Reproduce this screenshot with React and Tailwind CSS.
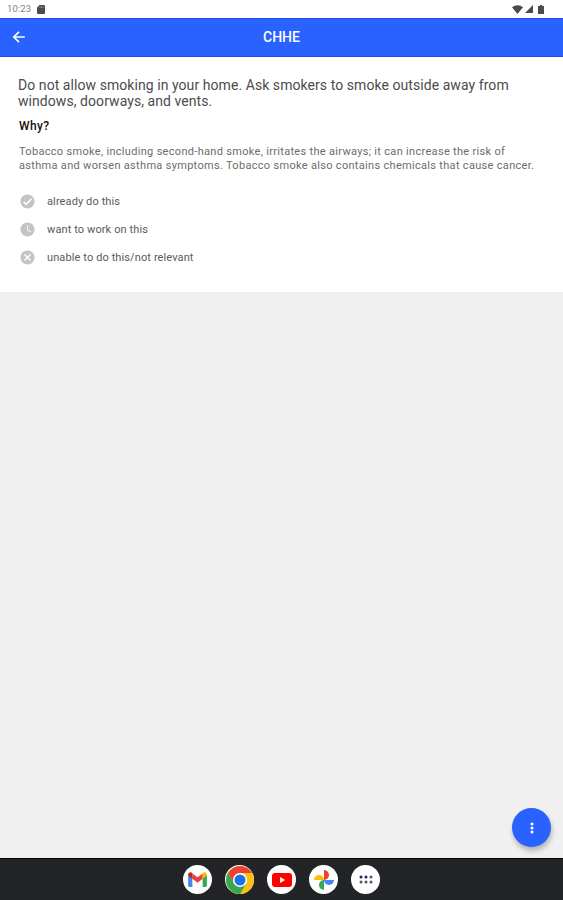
const OPTIONS = [
  { label: "already do this", icon: CheckIcon },
  { label: "want to work on this", icon: ClockIcon },
  { label: "unable to do this/not relevant", icon: CloseIcon },
];

const DOCK = [
  { name: "Gmail", icon: GmailIcon },
  { name: "Chrome", icon: ChromeIcon },
  { name: "YouTube", icon: YouTubeIcon },
  { name: "Photos", icon: PhotosIcon },
  { name: "Apps", icon: AppsIcon },
];

function CheckIcon() {
  return (
    <svg viewBox="0 0 24 24" className="h-[17px] w-[17px]">
      <circle cx="12" cy="12" r="10" fill="#c4c4c4" />
      <path d="m6.500 12.500 3.700 3.500 7.300-7.700" fill="none" stroke="#fff" strokeWidth="2.200" />
    </svg>
  );
}

function ClockIcon() {
  return (
    <svg viewBox="0 0 24 24" className="h-[17px] w-[17px]">
      <circle cx="12" cy="12" r="10" fill="#c4c4c4" />
      <path d="M12 6.500v6l4.500 2.700" fill="none" stroke="#f4f4f4" strokeWidth="1.500" />
    </svg>
  );
}

function CloseIcon() {
  return (
    <svg viewBox="0 0 24 24" className="h-[17px] w-[17px]">
      <circle cx="12" cy="12" r="10" fill="#c4c4c4" />
      <path d="m7.700 7.700 8.600 8.600m0-8.600-8.600 8.600" stroke="#fff" strokeWidth="2" />
    </svg>
  );
}

function GmailIcon() {
  return (
    <svg viewBox="0 0 20 16" className="h-[15px] w-[19px]">
      <path fill="#4285f4" d="M0 3v11.500A1.500 1.500 0 0 0 1.500 16H4.500V6z" />
      <path fill="#34a853" d="M20 3v11.500a1.500 1.500 0 0 1-1.500 1.500h-3V6z" />
      <path fill="#ea4335" d="M4.500 1.500 10 5.700l5.500-4.200V7.200L10 11.400 4.500 7.200z" />
      <path fill="#c5221f" d="M0 3C0 .5 2.600-.5 4.500 1v6.200L0 3.800z" />
      <path fill="#fbbc04" d="M20 3c0-2.500-2.600-3.500-4.500-2v6.200L20 3.800z" />
    </svg>
  );
}

function ChromeIcon() {
  return (
    <svg viewBox="0 0 28 28" className="h-7 w-7">
      <circle cx="14" cy="14" r="14" fill="#fbc116" />
      <path fill="#ea4335" d="M1.900 7A14 14 0 0 1 26.100 7H14L8 17.500z" />
      <path fill="#34a853" d="M1.900 7A14 14 0 0 0 14 28l6-10.500L14 21l-6-3.500z" />
      <circle cx="14" cy="14" r="7" fill="#fff" />
      <circle cx="14" cy="14" r="5.500" fill="#1a73e8" />
    </svg>
  );
}

function YouTubeIcon() {
  return (
    <svg viewBox="0 0 20 14" className="h-[14px] w-5">
      <rect width="20" height="14" rx="3" fill="#f00" />
      <path fill="#fff" d="m8 4 5.200 3L8 10z" />
    </svg>
  );
}

function PhotosIcon() {
  return (
    <svg viewBox="0 0 20 20" className="h-5 w-5">
      <path fill="#ea4335" d="M10 0a5 5 0 0 1 0 10z" />
      <path fill="#4285f4" d="M20 10a5 5 0 0 1-10 0z" />
      <path fill="#34a853" d="M10 20a5 5 0 0 1 0-10z" />
      <path fill="#fbbc04" d="M0 10a5 5 0 0 1 10 0z" />
    </svg>
  );
}

function AppsIcon() {
  return (
    <svg viewBox="0 0 14 9" className="h-[9px] w-[14px]">
      <g fill="#25206b">
        <circle cx="2" cy="2" r="1.500" />
        <circle cx="7" cy="2" r="1.500" />
      </g>
      <g fill="#55555f">
        <circle cx="12" cy="2" r="1.500" />
        <circle cx="2" cy="7" r="1.500" />
        <circle cx="7" cy="7" r="1.500" />
        <circle cx="12" cy="7" r="1.500" />
      </g>
    </svg>
  );
}

function StatusBar() {
  return (
    <div className="flex h-[18px] shrink-0 items-center justify-between bg-white pl-[7px] pr-[19px]">
      <div className="flex items-center gap-[6px]">
        <span className="text-[9.5px] leading-none tracking-[0.1px] text-[#858585]">10:23</span>
        <svg viewBox="0 0 8 9" className="h-[9px] w-2">
          <path fill="#4b4b4b" d="M2.500 0H7a1 1 0 0 1 1 1v7a1 1 0 0 1-1 1H1a1 1 0 0 1-1-1V2.500z" />
          <path stroke="#aaa" strokeWidth=".7" d="M3 1.300v1.700m1.600-1.700v1.700m1.600-1.700v1.700" />
        </svg>
      </div>
      <div className="flex items-center gap-[2px]">
        <svg viewBox="0 0 11 9" className="h-[9px] w-[11px]">
          <path fill="#4b4b4b" d="M0 2.200a8.500 8.500 0 0 1 11 0L5.500 9z" />
        </svg>
        <svg viewBox="0 0 8 8" className="h-2 w-2">
          <path fill="#4b4b4b" d="M8 0v8H0z" />
        </svg>
        <svg viewBox="0 0 6 9" className="ml-[3px] h-[9px] w-[6px]">
          <path fill="#4b4b4b" d="M1.800 0h2.400v1H6v8H0V1h1.800z" />
        </svg>
      </div>
    </div>
  );
}

export default function App() {
  return (
    <div className="flex h-[900px] w-[563px] flex-col overflow-hidden bg-[#f0f0f0] font-['Roboto',sans-serif]">
      <StatusBar />

      <header className="grid h-[39px] shrink-0 grid-cols-[40px_1fr_40px] items-center border-y border-[#1c50ee] bg-[#2962ff] pb-px text-white">
        <button type="button" aria-label="Back" className="pl-[12px]">
          <svg viewBox="0 0 14 14" className="h-[14px] w-[14px]">
            <path
              d="M12.800 7H2M7 1.800 1.800 7 7 12.200"
              fill="none"
              stroke="currentColor"
              strokeWidth="1.700"
            />
          </svg>
        </button>
        <h1 className="text-center text-[14px] font-medium leading-none">CHHE</h1>
      </header>

      <main className="h-[235px] shrink-0 whitespace-nowrap bg-white pl-[18px] pt-[20px]">
        <p className="text-[14px] leading-4 tracking-[0.063px] text-[#4c4c4c]">
          Do not allow smoking in your home. Ask smokers to smoke outside away from
          <br />
          windows, doorways, and vents.
        </p>
        <h2 className="ml-px mt-[9px] text-[12px] font-medium leading-4 tracking-[0.4px] text-[#111]">
          Why?
        </h2>
        <p className="ml-px mt-[11px] text-[11px] leading-[14px] tracking-[0.31px] text-[#6c6c6c]">
          Tobacco smoke, including second-hand smoke, irritates the airways; it can increase the risk of
          <br />
          asthma and worsen asthma symptoms. Tobacco smoke also contains chemicals that cause cancer.
        </p>
        <ul className="ml-px mt-[14px]">
          {OPTIONS.map(({ label, icon: Icon }) => (
            <li key={label} className="flex h-7 items-center gap-[11px]">
              <Icon />
              <span className="text-[11px] leading-none tracking-[0.11px] text-[#5a5a5a]">{label}</span>
            </li>
          ))}
        </ul>
      </main>

      <section className="flex grow items-end justify-end pb-[11px] pr-[12px]">
        <button
          type="button"
          aria-label="More"
          className="flex h-[39px] w-[39px] items-center justify-center rounded-full bg-[#2962ff] shadow-[1px_4px_5px_rgba(0,0,0,0.25)]"
        >
          <svg viewBox="0 0 4 12" className="h-3 w-1 fill-white">
            <circle cx="2" cy="2" r="1.500" />
            <circle cx="2" cy="6" r="1.500" />
            <circle cx="2" cy="10" r="1.500" />
          </svg>
        </button>
      </section>

      <nav className="flex h-[42px] shrink-0 items-center justify-center gap-[13px] border-t border-black bg-[#232427]">
        {DOCK.map(({ name, icon: Icon }) => (
          <div
            key={name}
            className="flex h-[29px] w-[29px] items-center justify-center rounded-full bg-white"
          >
            <Icon />
          </div>
        ))}
      </nav>
    </div>
  );
}
